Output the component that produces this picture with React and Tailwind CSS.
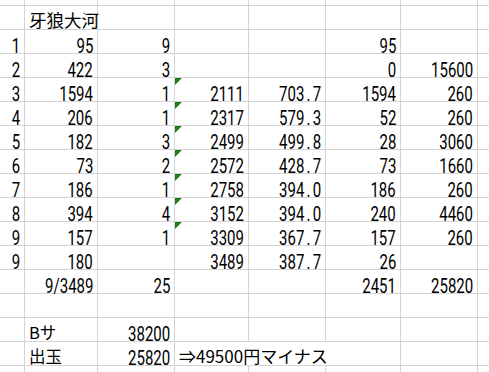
const COLS = "grid grid-cols-[25px_73px_77px_74px_77px_75px_77px_1fr]";

const rows = [
  ["1", "95", "9", "", "", "95", ""],
  ["2", "422", "3", "", "", "0", "15600"],
  ["3", "1594", "1", "2111", "703.7", "1594", "260"],
  ["4", "206", "1", "2317", "579.3", "52", "260"],
  ["5", "182", "3", "2499", "499.8", "28", "3060"],
  ["6", "73", "2", "2572", "428.7", "73", "1660"],
  ["7", "186", "1", "2758", "394.0", "186", "260"],
  ["8", "394", "4", "3152", "394.0", "240", "4460"],
  ["9", "157", "1", "3309", "367.7", "157", "260"],
  ["9", "180", "", "3489", "387.7", "26", ""],
  ["", "9/3489", "25", "", "", "2451", "25820"],
];

// digits in a narrow, monospaced look like the sheet font
function Digits({ v }) {
  const parts = v.split(".");
  return (
    <span className="mb-[-3px] inline-block origin-right scale-x-75 whitespace-nowrap font-['Roboto',sans-serif] text-[20px] leading-[20px] tabular-nums">
      {parts.length === 2 ? (
        <>
          {parts[0]}
          <span className="mx-[3px]">.</span>
          {parts[1]}
        </>
      ) : (
        v
      )}
    </span>
  );
}

function Num({ v, flag }) {
  return (
    <div className="relative flex h-[24px] items-end justify-end border-r border-b border-[#d4d4d4] pr-[4px]">
      {flag && (
        <span className="absolute top-0 left-0 h-[7px] w-[7px] bg-[#1b7d1b] [clip-path:polygon(0_0,100%_0,0_100%)]" />
      )}
      <Digits v={v} />
    </div>
  );
}

function Txt({ v, big }) {
  return (
    <div className="flex h-[24px] items-end border-r border-b border-[#d4d4d4] pl-[4px]">
      <span
        className={
          big
            ? "mb-[-1px] whitespace-nowrap text-[17.5px] leading-[20px]"
            : "mb-[-1px] whitespace-nowrap text-[16.5px] leading-[20px]"
        }
      >
        {v}
      </span>
    </div>
  );
}

function Blank() {
  return <div className="h-[24px] border-r border-b border-[#d4d4d4]" />;
}

function Last() {
  return <div className="h-[24px] border-b border-[#d4d4d4]" />;
}

export default function App() {
  return (
    <div className="h-[372px] w-[489px] overflow-hidden bg-white font-['Noto_Sans_CJK_JP',sans-serif] text-black">
      {/* partial top row */}
      <div className={COLS}>
        {[0, 1, 2, 3, 4, 5, 6].map((i) => (
          <div key={i} className="h-[6px] border-r border-b border-[#d4d4d4]" />
        ))}
        <div className="h-[6px] border-b border-[#d4d4d4]" />
      </div>

      {/* title */}
      <div className={COLS}>
        <Blank />
        <Txt v="牙狼大河" big />
        <Blank />
        <Blank />
        <Blank />
        <Blank />
        <Blank />
        <Last />
      </div>

      {rows.map((r, i) => (
        <div key={i} className={COLS}>
          {r.map((v, j) =>
            v === "" ? (
              <Blank key={j} />
            ) : (
              <Num key={j} v={v} flag={j === 3 && i >= 2 && i <= 8} />
            )
          )}
          <Last />
        </div>
      ))}

      {/* empty row */}
      <div className={COLS}>
        <Blank />
        <Blank />
        <Blank />
        <Blank />
        <Blank />
        <Blank />
        <Blank />
        <Last />
      </div>

      <div className={COLS}>
        <Blank />
        <Txt v="Bサ" />
        <Num v="38200" />
        <Blank />
        <Blank />
        <Blank />
        <Blank />
        <Last />
      </div>

      <div className={COLS}>
        <Blank />
        <Txt v="出玉" />
        <Num v="25820" />
        <div className="col-span-3 flex h-[24px] items-end border-r border-b border-[#d4d4d4] pl-[4px]">
          <span className="mb-[-1px] whitespace-nowrap text-[17px] leading-[20px]">
            ⇒49500円マイナス
          </span>
        </div>
        <Blank />
        <Last />
      </div>

      <div className={COLS}>
        <Blank />
        <Blank />
        <Blank />
        <Blank />
        <Blank />
        <Blank />
        <Blank />
        <Last />
      </div>
    </div>
  );
}
